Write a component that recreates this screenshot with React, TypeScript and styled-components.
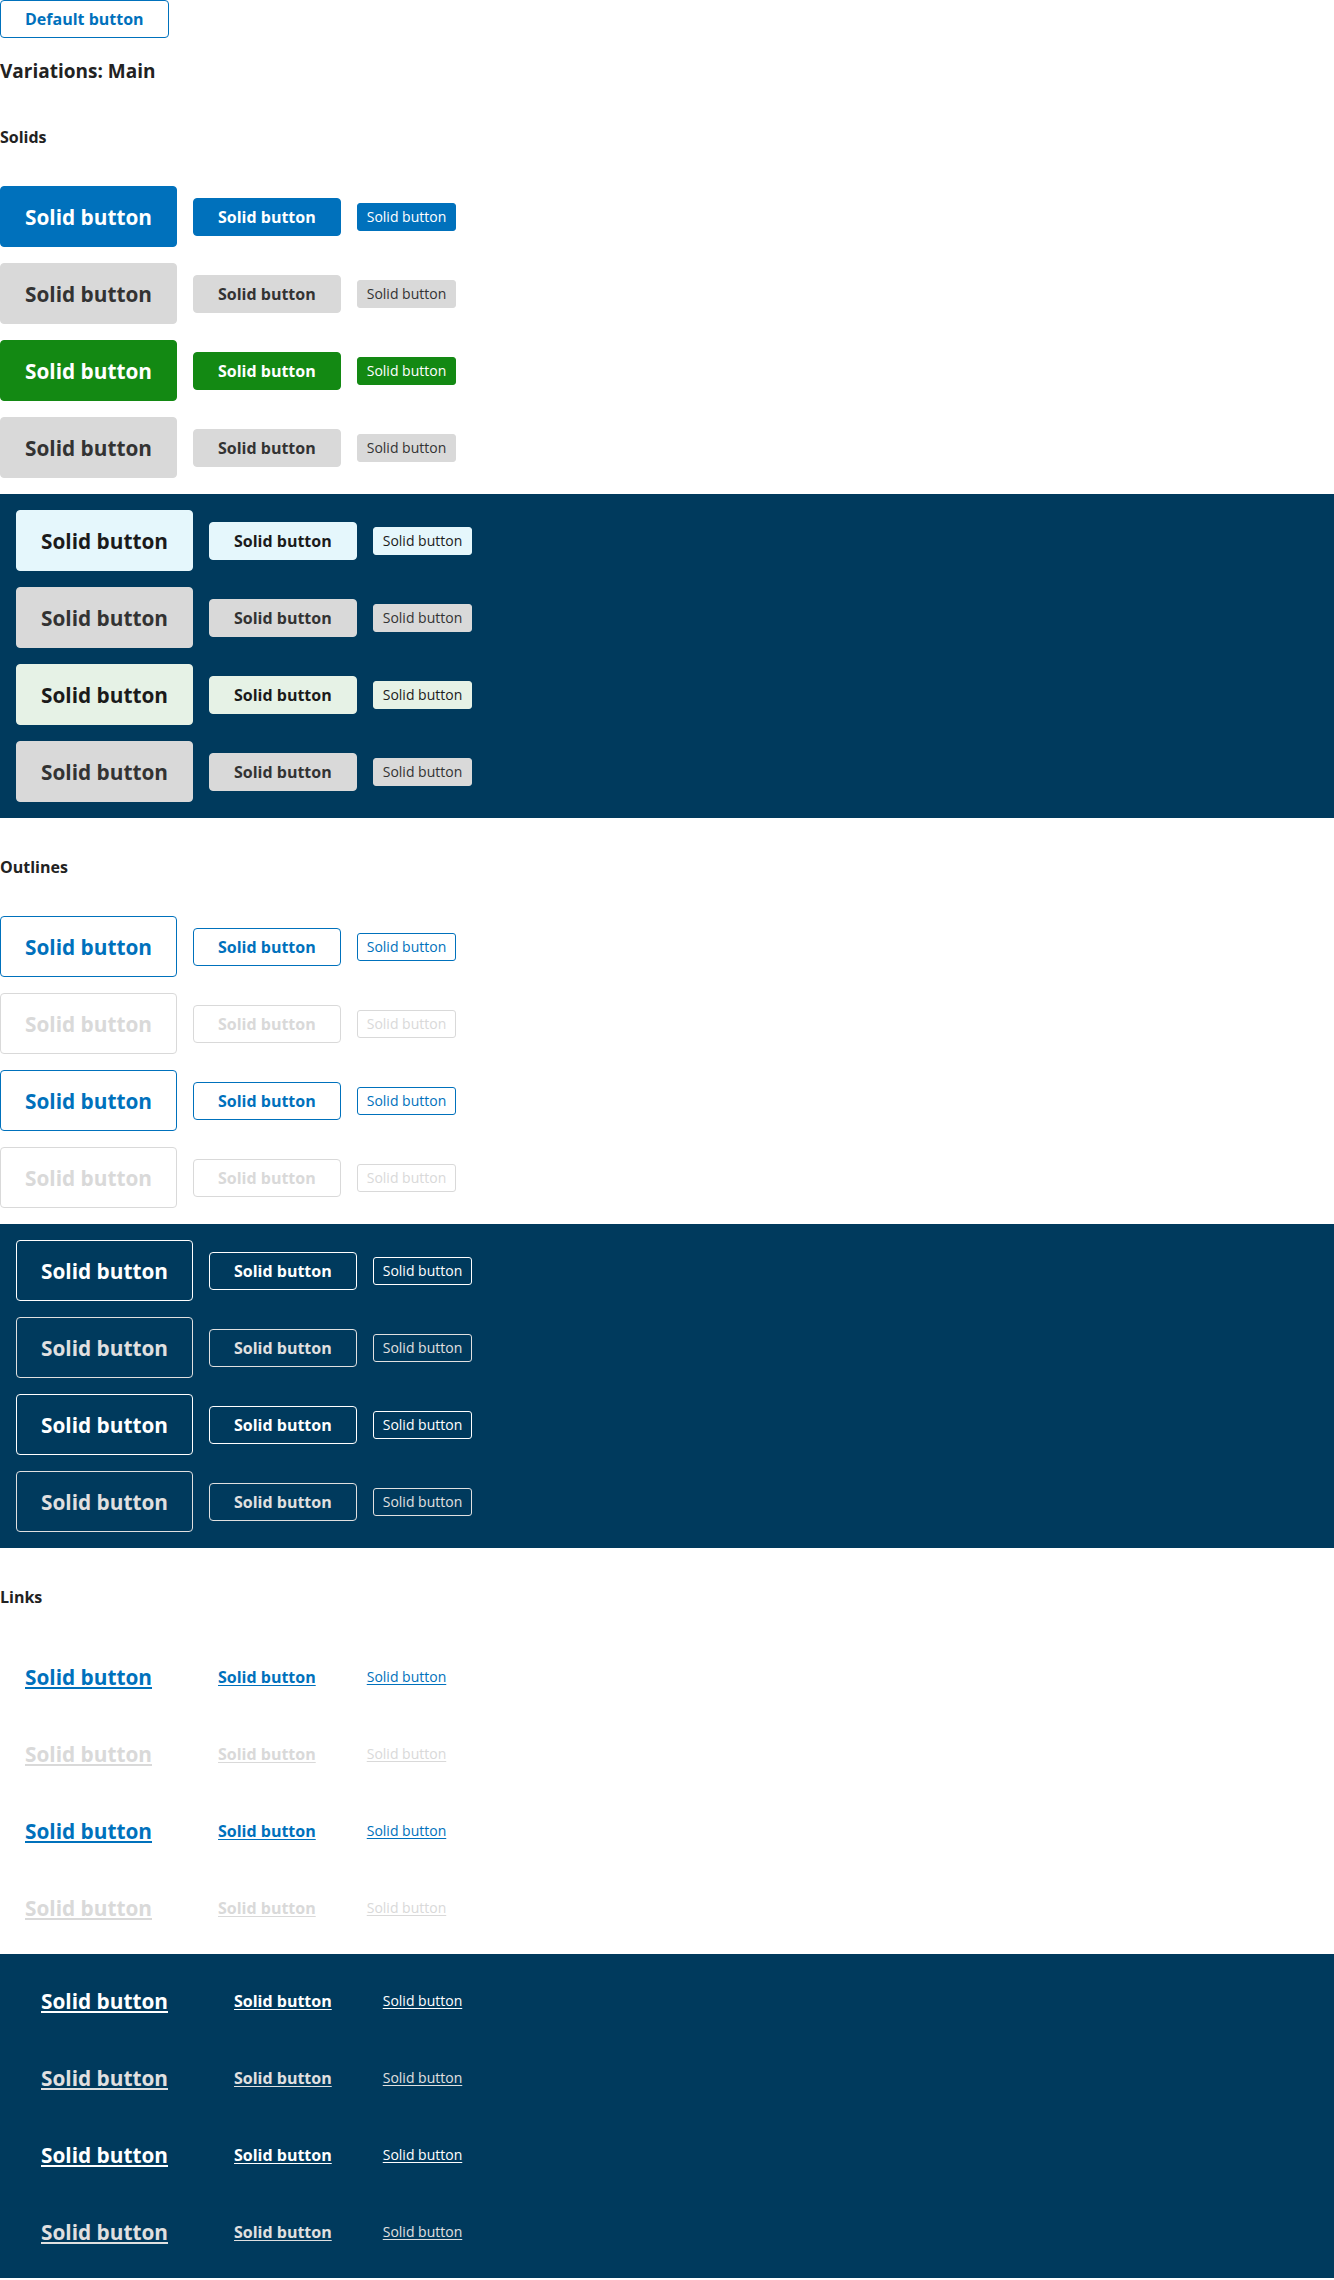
import React from "react";
import styled, { createGlobalStyle, css } from "styled-components";

type Size = "lg" | "md" | "sm";
type Kind = "solid" | "outline" | "link";

interface Tone {
  bg: string;
  fg: string;
}

const BLUE = "#0071bc";
const GREEN = "#138913";
const GREY = "#d9d9d9";
const NAVY = "#003a5d";

const GlobalStyle = createGlobalStyle`
  body {
    margin: 0;
    font-family: "Open Sans", "Noto Sans", sans-serif;
    color: #222;
    background: #fff;
  }
`;

const sizes = {
  lg: css`
    height: 61px;
    padding: 0 24px;
    font-size: 20.8px;
    font-weight: 700;
    border-radius: 4px;
    text-decoration-thickness: 2px;
  `,
  md: css`
    height: 38px;
    padding: 0 24px;
    font-size: 16px;
    font-weight: 700;
    border-radius: 4px;
    text-decoration-thickness: 1.5px;
  `,
  sm: css`
    height: 28px;
    padding: 0 9px;
    font-size: 14px;
    font-weight: 400;
    border-radius: 3px;
    text-decoration-thickness: 1px;
  `,
};

const Button = styled.button<{ $size: Size; $kind: Kind; $tone: Tone }>`
  box-sizing: border-box;
  display: inline-flex;
  align-items: center;
  justify-content: center;
  flex: none;
  margin: 0;
  font-family: "Open Sans", "Noto Sans", sans-serif;
  line-height: normal;
  white-space: nowrap;
  cursor: pointer;
  border: 1px solid transparent;
  ${(p) => sizes[p.$size]}
  ${(p) =>
    p.$kind === "solid" &&
    css`
      background: ${p.$tone.bg};
      border-color: ${p.$tone.bg};
      color: ${p.$tone.fg};
    `}
  ${(p) =>
    p.$kind === "outline" &&
    css`
      background: transparent;
      border-color: ${p.$tone.fg};
      color: ${p.$tone.fg};
    `}
  ${(p) =>
    p.$kind === "link" &&
    css`
      background: transparent;
      color: ${p.$tone.fg};
      text-decoration: underline;
      text-underline-offset: 2px;
    `}
`;

const Title = styled.h2`
  margin: 20px 0 42px;
  font-size: 19px;
  font-weight: 700;
  line-height: normal;
  color: #222;
`;

const SectionHeading = styled.h4`
  margin: 38px 0 38px;
  font-size: 16px;
  font-weight: 700;
  line-height: normal;
  color: #222;
`;

const Panel = styled.section<{ $dark?: boolean }>`
  display: flex;
  flex-direction: column;
  gap: 16px;
  background: ${(p) => (p.$dark ? NAVY : "transparent")};
  padding: ${(p) => (p.$dark ? "16px" : "0 0 16px")};
`;

const Row = styled.div`
  display: flex;
  align-items: center;
  gap: 16px;
`;

const solidLight: Tone[] = [
  { bg: BLUE, fg: "#fff" },
  { bg: GREY, fg: "#333" },
  { bg: GREEN, fg: "#fff" },
  { bg: GREY, fg: "#333" },
];

const solidDark: Tone[] = [
  { bg: "#e5f7fc", fg: "#1b1b1b" },
  { bg: GREY, fg: "#333" },
  { bg: "#e6f2e6", fg: "#1b1b1b" },
  { bg: GREY, fg: "#333" },
];

const lineLight: Tone[] = [
  { bg: "transparent", fg: BLUE },
  { bg: "transparent", fg: GREY },
  { bg: "transparent", fg: BLUE },
  { bg: "transparent", fg: GREY },
];

const lineDark: Tone[] = [
  { bg: "transparent", fg: "#fff" },
  { bg: "transparent", fg: "#e0e0e0" },
  { bg: "transparent", fg: "#fff" },
  { bg: "transparent", fg: "#e0e0e0" },
];

const ButtonRows = ({ kind, tones }: { kind: Kind; tones: Tone[] }) => (
  <>
    {tones.map((tone, i) => (
      <Row key={i}>
        {(["lg", "md", "sm"] as Size[]).map((size) => (
          <Button key={size} $size={size} $kind={kind} $tone={tone}>
            Solid button
          </Button>
        ))}
      </Row>
    ))}
  </>
);

export default function App() {
  return (
    <>
      <GlobalStyle />
      <Button $size="md" $kind="outline" $tone={{ bg: "#fff", fg: BLUE }}>
        Default button
      </Button>
      <Title>Variations: Main</Title>

      <SectionHeading>Solids</SectionHeading>
      <Panel>
        <ButtonRows kind="solid" tones={solidLight} />
      </Panel>
      <Panel $dark>
        <ButtonRows kind="solid" tones={solidDark} />
      </Panel>

      <SectionHeading>Outlines</SectionHeading>
      <Panel>
        <ButtonRows kind="outline" tones={lineLight} />
      </Panel>
      <Panel $dark>
        <ButtonRows kind="outline" tones={lineDark} />
      </Panel>

      <SectionHeading>Links</SectionHeading>
      <Panel>
        <ButtonRows kind="link" tones={lineLight} />
      </Panel>
      <Panel $dark>
        <ButtonRows kind="link" tones={lineDark} />
      </Panel>
    </>
  );
}
